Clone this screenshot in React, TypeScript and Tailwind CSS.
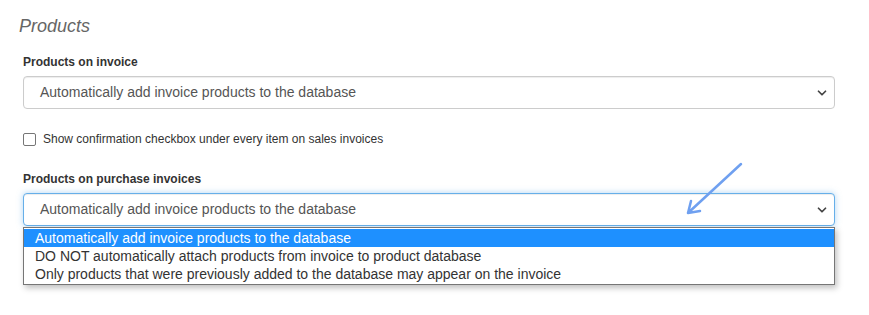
import { ChevronDown } from "lucide-react";

const font = { fontFamily: '"Liberation Sans", Arial, sans-serif' };

const opcoes = [
  "Automatically add invoice products to the database",
  "DO NOT automatically attach products from invoice to product database",
  "Only products that were previously added to the database may appear on the invoice",
];

function FakeSelect({ value, focus }: { value: string; focus?: boolean }) {
  return (
    <div
      className={`flex h-[33px] items-center justify-between rounded-[4px] border bg-white pl-4 pr-[5px] text-[14px] text-[#555] ${
        focus
          ? "border-[#66afe9] shadow-[inset_0_1px_1px_rgba(0,0,0,0.075),0_0_6px_rgba(102,175,233,0.5)]"
          : "border-[#ccc] shadow-[inset_0_1px_1px_rgba(0,0,0,0.075)]"
      }`}
    >
      <span>{value}</span>
      <ChevronDown size={14} strokeWidth={3} className="text-[#444]" />
    </div>
  );
}

export default function App() {
  return (
    <div className="relative h-[315px] w-[869px] bg-white" style={font}>
      <div className="pl-[19px] pt-[14px]">
        <h3 className="text-[18px] italic leading-[24px] text-[#666]">Products</h3>
      </div>

      <div className="w-[835px] pl-[23px]">
        <p className="mt-[17px] text-[12px] font-bold leading-[14px] text-[#333]">Products on invoice</p>
        <div className="mt-[7px]">
          <FakeSelect value={opcoes[0]} />
        </div>

        <label className="mt-[21px] flex items-center gap-[7px] text-[12px] text-[#333]">
          <span className="h-[13px] w-[13px] rounded-[2px] border border-[#767676] bg-white" />
          Show confirmation checkbox under every item on sales invoices
        </label>

        <p className="mt-[24px] text-[12px] font-bold leading-[14px] text-[#333]">Products on purchase invoices</p>
        <div className="relative mt-[7px]">
          <FakeSelect value={opcoes[0]} focus />
          {/* lista aberta do select */}
          <div className="absolute left-0 right-0 top-[34px] border border-[#767676] bg-white py-[1px] shadow-[2px_3px_6px_rgba(0,0,0,0.25)]">
            {opcoes.map((o, i) => (
              <div
                key={o}
                className={`h-[18px] pl-[11px] text-[14px] leading-[18px] ${
                  i === 0 ? "bg-[#1e90ff] text-white" : "text-[#333]"
                }`}
              >
                {o}
              </div>
            ))}
          </div>
        </div>
      </div>

      {/* seta de anotação */}
      <svg className="absolute left-0 top-0" width="869" height="315" fill="none">
        <path
          d="M741 164 L688 213 M688 213 L691 201 M688 213 L700 211"
          stroke="#6fa0f0"
          strokeWidth="2.5"
          strokeLinecap="round"
          strokeLinejoin="round"
        />
      </svg>
    </div>
  );
}
